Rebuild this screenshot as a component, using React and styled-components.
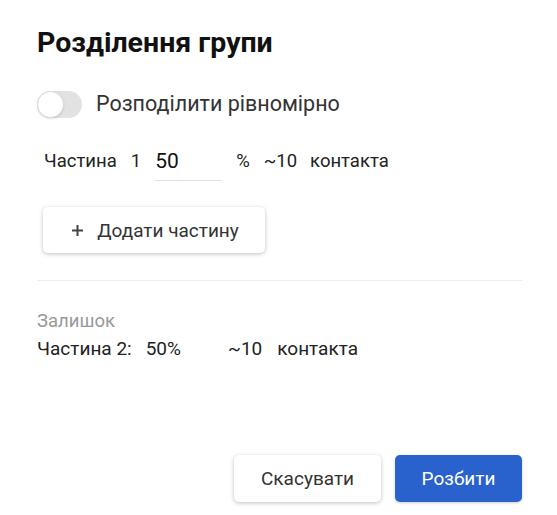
import React from "react";
import styled, { createGlobalStyle } from "styled-components";

const Global = createGlobalStyle`
  html, body { margin: 0; padding: 0; background: #fff; }
  body { font-family: Roboto, "Noto Sans", sans-serif; color: #222; }
  * { box-sizing: border-box; }
`;

const Dialog = styled.div`
  width: 557px;
  height: 515px;
  padding: 28px 35px 0 37px;
  display: flex;
  flex-direction: column;
`;

const Title = styled.h2`
  margin: 0;
  font-size: 28.5px;
  font-weight: 700;
  color: #111;
  line-height: 30px;
`;

const SwitchRow = styled.label`
  display: flex;
  align-items: center;
  gap: 14px;
  margin-top: 32px;
  font-size: 21.5px;
  color: #333;
  line-height: 28px;
`;

const Track = styled.span`
  position: relative;
  width: 45px;
  height: 27px;
  border-radius: 14px;
  background: #e2e2e2;
  flex: none;
`;

const Thumb = styled.span`
  position: absolute;
  left: 0;
  top: 0;
  width: 27px;
  height: 27px;
  border-radius: 50%;
  background: #fff;
  border: 1px solid #dcdcdc;
  box-shadow: 0 1px 2px rgba(0,0,0,0.12);
`;

const PartRow = styled.div`
  display: flex;
  align-items: center;
  margin-top: 25px;
  margin-left: 7px;
  font-size: 18.5px;
  color: #222;
  height: 36px;
`;

const Gap = styled.span`
  display: inline-block;
  flex: none;
  width: ${p => p.$w}px;
`;

const NumInput = styled.input`
  width: 67px;
  border: none;
  border-bottom: 1px solid #e0e0e0;
  font-family: Roboto, sans-serif;
  font-size: 21px;
  color: #111;
  padding: 5px 0 7px 0;
  margin-top: 2px;
  outline: none;
  background: transparent;
`;

const AddButton = styled.button`
  align-self: flex-start;
  margin-top: 28px;
  margin-left: 6px;
  width: 222px;
  height: 46px;
  display: flex;
  align-items: center;
  justify-content: center;
  gap: 13px;
  background: #fff;
  border: none;
  border-radius: 5px;
  box-shadow: 0 1px 4px rgba(0,0,0,0.25);
  font-family: Roboto, sans-serif;
  font-size: 19px;
  color: #333;
  padding: 0 0 0 2px;
`;

const Divider = styled.hr`
  margin: 27px 0 0 0;
  border: none;
  border-top: 1px solid #ececec;
  width: 485px;
`;

const Muted = styled.div`
  margin-top: 29px;
  font-size: 18.5px;
  color: #999;
  line-height: 22px;
`;

const Summary = styled.div`
  margin-top: 6px;
  display: flex;
  font-size: 19px;
  color: #222;
  line-height: 22px;
`;

const Footer = styled.div`
  margin-top: auto;
  margin-bottom: 13px;
  display: flex;
  justify-content: flex-end;
  gap: 14px;
`;

const Btn = styled.button`
  height: 47px;
  width: ${p => p.$w}px;
  border-radius: 5px;
  border: none;
  font-family: Roboto, sans-serif;
  font-size: 19px;
  background: ${p => (p.$primary ? "#2a62cd" : "#fff")};
  color: ${p => (p.$primary ? "#fff" : "#333")};
  box-shadow: ${p => (p.$primary ? "0 1px 3px rgba(0,0,0,0.2)" : "0 1px 4px rgba(0,0,0,0.25)")};
`;

export default function App() {
  return (
    <>
      <Global />
      <Dialog>
        <Title>Розділення групи</Title>
        <SwitchRow>
          <Track><Thumb /></Track>
          Розподілити рівномірно
        </SwitchRow>
        <PartRow>
          Частина<Gap $w={14} />1<Gap $w={14} />
          <NumInput defaultValue="50" />
          <Gap $w={14} />%<Gap $w={14} />~10<Gap $w={13} />контакта
        </PartRow>
        <AddButton>
          <svg width="13" height="13" viewBox="0 0 13 13">
            <path d="M6.5 1v11M1 6.5h11" stroke="#444" strokeWidth="2" />
          </svg>
          Додати частину
        </AddButton>
        <Divider />
        <Muted>Залишок</Muted>
        <Summary>
          Частина 2:<Gap $w={14} />50%<Gap $w={47} />~10<Gap $w={15} />контакта
        </Summary>
        <Footer>
          <Btn $w={147}>Скасувати</Btn>
          <Btn $primary $w={127}>Розбити</Btn>
        </Footer>
      </Dialog>
    </>
  );
}
